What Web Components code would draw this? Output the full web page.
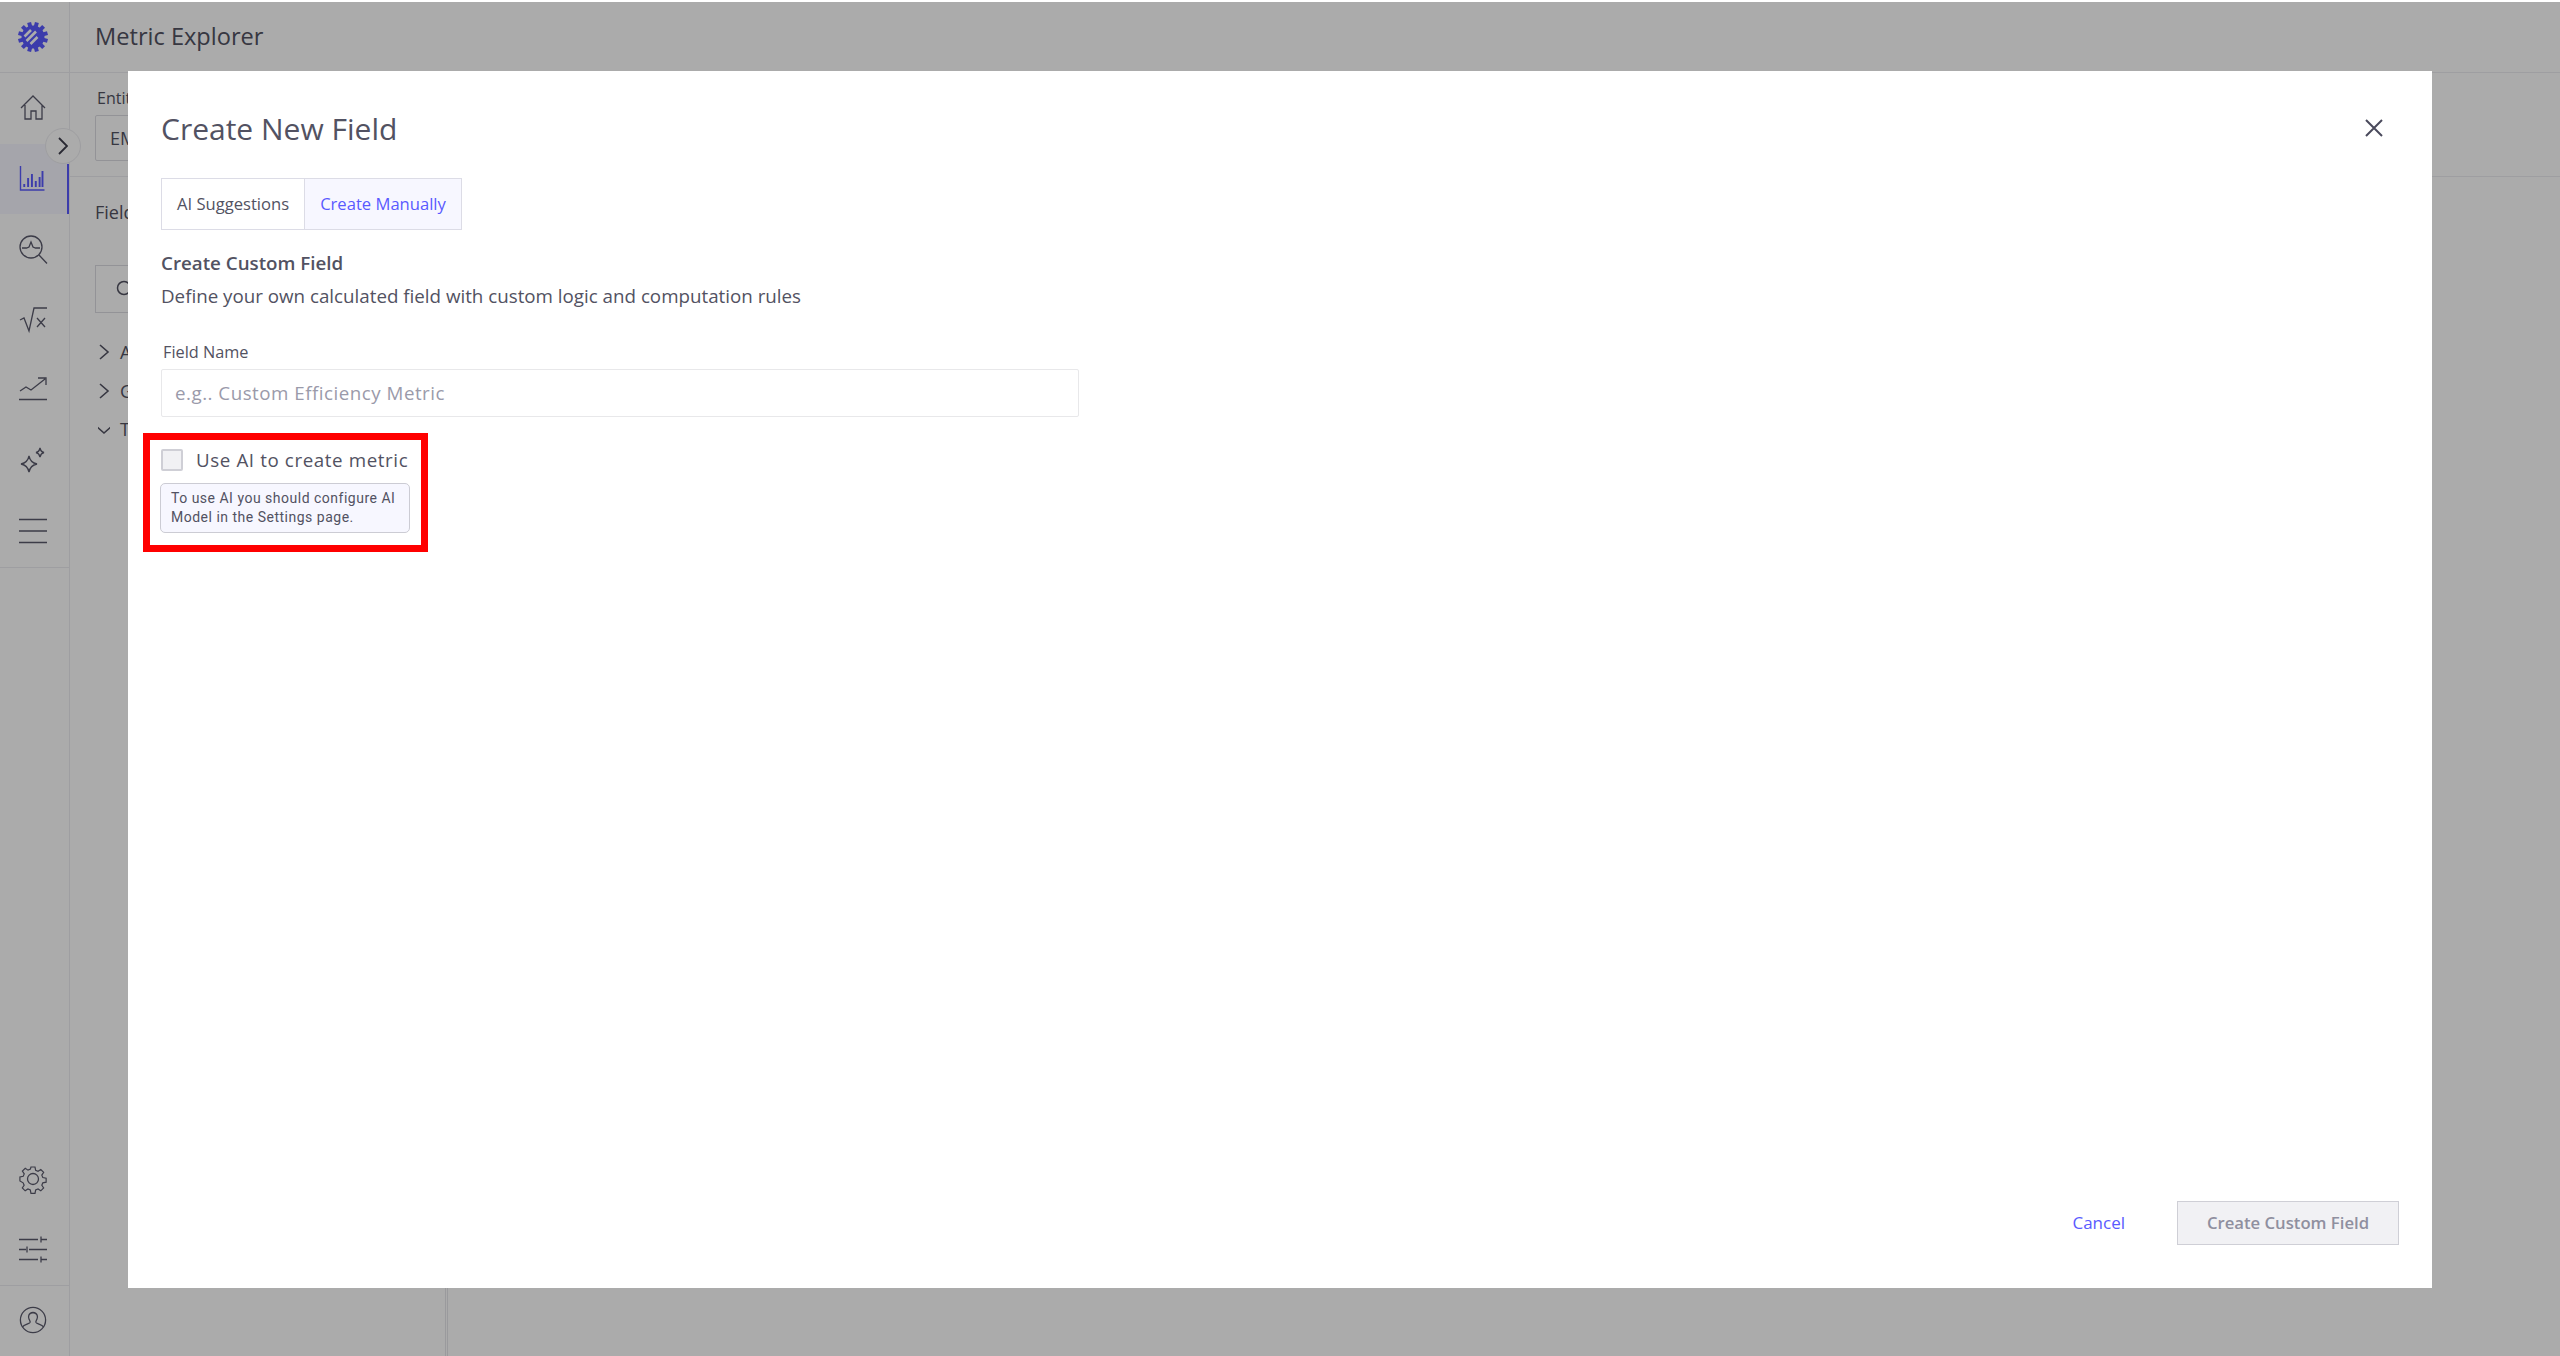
<!DOCTYPE html>
<html lang="en">
<head>
<meta charset="utf-8">
<title>Metric Explorer</title>
<style>
html, body { margin: 0; height: 100%; }
body { background: #fff; font-family: "Open Sans", sans-serif; color: #525262; overflow: hidden; padding-top: 2px; box-sizing: border-box; }
</style>
</head>
<body>
<app-shell>
  <side-nav slot="nav"></side-nav>
  <explorer-view title-text="Metric Explorer"></explorer-view>
</app-shell>
<modal-overlay>
  <field-dialog heading="Create New Field"></field-dialog>
</modal-overlay>

<script>
const shellTemplate = document.createElement('template');
shellTemplate.innerHTML = `
<style>
:host { display: flex; height: 1354px; }
</style>
<slot name="nav"></slot>
<slot></slot>
`;
class AppShell extends HTMLElement {
    connectedCallback() {
        this.attachShadow({ mode: 'open' }).appendChild(shellTemplate.content.cloneNode(true));
    }
}
customElements.define('app-shell', AppShell);

const ICONS = {
    home: '<path d="M2 14 14 2l12 12M6 11v14h6v-8h5v8h6V11" />',
    chart: '<path d="M1.5 1v24h24" stroke-width="1.4"/><path d="M6 22v-3M10 22v-9M14 22V9M18 22v-6M22 22V12M25 22V6" stroke-width="2" transform="translate(-.5) scale(.96 1)"/>',
    lens: '<circle cx="12" cy="12" r="11"/><path d="M20 20l8 8.500M3 13h4.500l2.500-1 2-5 2 5 2.500 1H21" />',
    sqrt: '<path d="M1 14l4-2 5 13 5-23h13"/><path d="M18 12l8 9M26 12l-8 9"/>',
    trend: '<path d="M0 23.500h28M1 15l6-4 5 3 14-11M19 2h8v7"/>',
    spark: '<path d="M10 9c1 5 3 7 8 8-5 1-7 3-8 8-1-5-3-7-8-8 5-1 7-3 8-8zM21 1c.6 3 1.500 4 4 4.500-2.500.6-3.400 1.500-4 4.500-.6-3-1.500-3.900-4-4.500 2.500-.5 3.400-1.500 4-4.500z"/>',
    menu: '<path d="M0 2.500h28M0 14h28M0 25.500h28"/>',
    gear: '<circle cx="14" cy="14" r="5.500"/><path d="M11.800 1h4.400l.7 3.600 2.600 1.100 3-2 3.100 3.100-2 3 1.100 2.600 3.600.7v4.400l-3.600.7-1.100 2.600 2 3-3.100 3.100-3-2-2.600 1.100-.7 3.600h-4.400l-.7-3.600-2.600-1.100-3 2-3.100-3.100 2-3-1.100-2.600L-.2 16.200v-4.400l3.600-.7 1.100-2.600-2-3 3.100-3.100 3 2 2.600-1.100z" transform="translate(1.100 1.100) scale(.92)"/>',
    sliders: '<path d="M0 4h19M22 4h6M22 1v6M0 14h7M10 14h18M8 11v6M0 24h19M22 24h6M22 21v6" transform="translate(0 -.5)"/>',
    user: '<circle cx="14" cy="14" r="12.600"/><path d="M3.500 21c1.500-2.500 6.500-3 7.500-4.500.6-1-.3-2-1-3.500-.8-1.700-1-6 4-6.500 5 .5 4.800 4.800 4 6.500-.7 1.500-1.600 2.500-1 3.500 1 1.500 6 2 7.500 4.500"/>'
};

const navItemTemplate = document.createElement('template');
navItemTemplate.innerHTML = `
<style>
:host { display: flex; align-items: center; justify-content: center; height: 70.5px; padding-right: 3px; box-sizing: border-box; position: relative; color: #5a5a6c; }
:host([active]) { background: #f7f7ff; color: #5a5aff; }
:host([active])::after { content: ""; position: absolute; right: 0; top: 20px; bottom: 0; width: 2px; background: #5a5aff; }
svg { width: 28px; height: 28px; fill: none; stroke: currentColor; stroke-width: 1.300; overflow: visible; }
</style>
<svg viewBox="0 0 28 28"></svg>
`;
class NavItem extends HTMLElement {
    connectedCallback() {
        const root = this.attachShadow({ mode: 'open' });
        root.appendChild(navItemTemplate.content.cloneNode(true));
        root.querySelector('svg').innerHTML = ICONS[this.getAttribute('icon')];
    }
}
customElements.define('nav-item', NavItem);

const sideNavTemplate = document.createElement('template');
sideNavTemplate.innerHTML = `
<style>
:host { display: flex; flex-direction: column; width: 70px; flex: none; box-sizing: border-box; border-right: 1px solid #ececf0; position: relative; }
.logo { height: 70px; flex: none; display: flex; align-items: center; justify-content: center; padding-right: 3px; border-bottom: 1px solid #ececf0; }
.logo svg { width: 32px; height: 32px; }
.group { border-bottom: 1px solid #ececf0; }
.bottom { margin-top: auto; }
.bottom nav-item:last-child { border-top: 1px solid #ececf0; height: 71px; padding-bottom: 2px; }
.toggle { position: absolute; left: 45px; top: 126px; width: 36px; height: 36px; border-radius: 50%; box-sizing: border-box; border: 1px solid #ececf0; background: #fff; display: flex; align-items: center; justify-content: center; color: #3e3e4c; }
.toggle svg { width: 10px; height: 18px; fill: none; stroke: currentColor; stroke-width: 1.800; }
</style>
<div class="logo">
  <svg viewBox="0 0 32 32">
    <g fill="#5a5aff">
      <circle cx="16" cy="16" r="11.500"/>
      <rect x="14" y="1" width="4" height="30" transform="rotate(15 16 16)"/>
      <rect x="14" y="1" width="4" height="30" transform="rotate(45 16 16)"/>
      <rect x="14" y="1" width="4" height="30" transform="rotate(75 16 16)"/>
      <rect x="14" y="1" width="4" height="30" transform="rotate(105 16 16)"/>
      <rect x="14" y="1" width="4" height="30" transform="rotate(135 16 16)"/>
      <rect x="14" y="1" width="4" height="30" transform="rotate(165 16 16)"/>
    </g>
    <g stroke="#fff" stroke-width="2.600" stroke-linecap="butt" fill="none">
      <path d="M7.500 15.500 14 9M9.500 20 19 10.500M13.500 23l7-7"/>
    </g>
  </svg>
</div>
<div class="group">
  <nav-item icon="home"></nav-item>
  <nav-item icon="chart" active></nav-item>
  <nav-item icon="lens"></nav-item>
  <nav-item icon="sqrt"></nav-item>
  <nav-item icon="trend"></nav-item>
  <nav-item icon="spark"></nav-item>
  <nav-item icon="menu"></nav-item>
</div>
<div class="bottom">
  <nav-item icon="gear"></nav-item>
  <nav-item icon="sliders"></nav-item>
  <nav-item icon="user"></nav-item>
</div>
<div class="toggle"><svg viewBox="0 0 10 18"><path d="M1 1l8 8-8 8"/></svg></div>
`;
class SideNav extends HTMLElement {
    connectedCallback() {
        this.attachShadow({ mode: 'open' }).appendChild(sideNavTemplate.content.cloneNode(true));
    }
}
customElements.define('side-nav', SideNav);

const explorerTemplate = document.createElement('template');
explorerTemplate.innerHTML = `
<style>
:host { display: flex; flex-direction: column; flex: 1; min-width: 0; font-family: "Open Sans", sans-serif; color: #525262; }
header { height: 71px; flex: none; box-sizing: border-box; display: flex; align-items: center; padding: 0 0 2px 25px; font-size: 23.600px; border-bottom: 1px solid #ececf0; }
.filters { height: 104px; flex: none; box-sizing: border-box; padding: 14px 0 0 25px; border-bottom: 1px solid #ececf0; }
.filters label { display: block; font-size: 16px; line-height: 22px; margin-left: 2px; }
.select { width: 300px; height: 46px; margin-top: 6px; box-sizing: border-box; border: 1px solid #dcdce2; border-radius: 2px; padding-left: 14px; font-size: 18px; line-height: 44px; }
.body { flex: 1; display: flex; min-height: 0; }
.panel { width: 378px; flex: none; box-sizing: border-box; padding: 22px 0 0 25px; border-right: 3px double #e6e6ea; }
h3 { margin: 0; font-size: 18px; line-height: 26px; font-weight: 400; }
.search { width: 300px; height: 48px; margin-top: 40px; box-sizing: border-box; border: 1px solid #dcdce2; display: flex; align-items: center; padding-left: 20px; }
.search svg { width: 18px; height: 18px; fill: none; stroke: #525262; stroke-width: 1.500; }
ul { list-style: none; margin: 20px 0 0; padding: 0; font-size: 18px; }
li { display: flex; align-items: center; gap: 10px; height: 38.500px; padding-left: 3px; }
li svg { width: 12px; height: 18px; fill: none; stroke: #525262; stroke-width: 1.600; flex: none; }
</style>
<header id="title"></header>
<div class="filters">
  <label>Entity</label>
  <div class="select">EM</div>
</div>
<div class="body">
  <aside class="panel">
    <h3>Fields</h3>
    <div class="search"><svg viewBox="0 0 18 18"><circle cx="8" cy="8" r="6.500"/><path d="M13 13l4 4"/></svg></div>
    <ul>
      <li><svg viewBox="0 0 12 18"><path d="M2 2l8 7-8 7"/></svg>A</li>
      <li><svg viewBox="0 0 12 18"><path d="M2 2l8 7-8 7"/></svg>G</li>
      <li><svg viewBox="0 0 12 18"><path d="M-2 6l8 7 8-7"/></svg>T</li>
    </ul>
  </aside>
</div>
`;
class ExplorerView extends HTMLElement {
    connectedCallback() {
        const root = this.attachShadow({ mode: 'open' });
        root.appendChild(explorerTemplate.content.cloneNode(true));
        root.getElementById('title').textContent = this.getAttribute('title-text');
    }
}
customElements.define('explorer-view', ExplorerView);

const overlayTemplate = document.createElement('template');
overlayTemplate.innerHTML = `
<style>
:host { position: fixed; inset: 2px 0 0 0; box-sizing: border-box; display: flex; padding: 69px 128px 68px; background: rgba(0, 0, 0, .33); }
</style>
<slot></slot>
`;
class ModalOverlay extends HTMLElement {
    connectedCallback() {
        this.attachShadow({ mode: 'open' }).appendChild(overlayTemplate.content.cloneNode(true));
    }
}
customElements.define('modal-overlay', ModalOverlay);

const dialogTemplate = document.createElement('template');
dialogTemplate.innerHTML = `
<style>
:host { flex: 1; display: flex; flex-direction: column; box-sizing: border-box; background: #fff; padding: 0 33px 43px 33px; font-family: "Open Sans", sans-serif; color: #525262; }
.top { display: flex; align-items: center; justify-content: space-between; height: 107px; padding-top: 7px; box-sizing: border-box; flex: none; }
h2 { margin: 0; font-size: 30px; font-weight: 400; }
.close { width: 18px; height: 18px; margin-right: 16px; }
.close svg { display: block; width: 18px; height: 18px; stroke: #4a4a5c; stroke-width: 2; fill: none; }
.tabs { display: flex; align-self: flex-start; border: 1px solid #dcdce6; font-size: 16.600px; height: 52px; box-sizing: border-box; }
.tabs span { display: flex; align-items: center; padding: 0 15px 1px; }
.tabs .on { background: #f7f7ff; color: #5a5aff; border-left: 1px solid #dcdce6; }
h4 { margin: 20px 0 0; font-size: 18.750px; line-height: 26px; font-weight: 600; }
.lead { margin: 7px 0 0; font-size: 18.750px; line-height: 26px; }
label { display: block; margin: 32px 0 0 2px; font-size: 16.300px; line-height: 22px; }
.input { width: 918px; height: 48px; margin-top: 6px; box-sizing: border-box; border: 1px solid #e8e8ea; border-radius: 2px; padding-left: 13px; font-size: 18.750px; line-height: 46px; color: #9a9aaa; letter-spacing: .5px; }
.ai { position: relative; margin-top: 32px; width: 250px; }
.ai::before { content: ""; position: absolute; left: -18px; top: -16px; width: 285px; height: 119px; box-sizing: border-box; border: 7px solid #ff0000; }
.check { display: flex; align-items: center; gap: 13px; font-size: 18.750px; line-height: 22px; letter-spacing: .6px; white-space: nowrap; }
.box { width: 22px; height: 22px; box-sizing: border-box; border: 2px solid #cfcfd6; border-radius: 2px; background: #f1f1f4; flex: none; }
.note { margin-top: 12px; margin-left: -1px; box-sizing: border-box; width: 250px; height: 50px; padding: 5px 10px; border: 1px solid #ccccd4; border-radius: 5px; background: #f7f7ff; font-family: Roboto, sans-serif; font-size: 14px; line-height: 19px; letter-spacing: .5px; white-space: nowrap; }
footer { margin-top: auto; display: flex; justify-content: flex-end; align-items: center; gap: 52px; }
.cancel { color: #5a5aff; font-size: 17px; padding-bottom: 1px; }
.submit { height: 44px; width: 222px; box-sizing: border-box; display: flex; align-items: center; justify-content: center; padding-bottom: 1px; background: #f1f1f4; border: 1px solid #cfcfd6; color: #8f8f9f; font-size: 16.700px; font-weight: 600; }
</style>
<div class="top">
  <h2 id="heading"></h2>
  <div class="close"><svg viewBox="0 0 18 18"><path d="M1 1l16 16M17 1 1 17"/></svg></div>
</div>
<div class="tabs"><span>AI Suggestions</span><span class="on">Create Manually</span></div>
<h4>Create Custom Field</h4>
<p class="lead">Define your own calculated field with custom logic and computation rules</p>
<label>Field Name</label>
<div class="input">e.g.. Custom Efficiency Metric</div>
<div class="ai">
  <div class="check"><span class="box"></span>Use AI to create metric</div>
  <div class="note">To use AI you should configure AI<br>Model in the Settings page.</div>
</div>
<footer>
  <span class="cancel">Cancel</span>
  <span class="submit">Create Custom Field</span>
</footer>
`;
class FieldDialog extends HTMLElement {
    connectedCallback() {
        const root = this.attachShadow({ mode: 'open' });
        root.appendChild(dialogTemplate.content.cloneNode(true));
        root.getElementById('heading').textContent = this.getAttribute('heading');
    }
}
customElements.define('field-dialog', FieldDialog);
</script>
</body>
</html>
